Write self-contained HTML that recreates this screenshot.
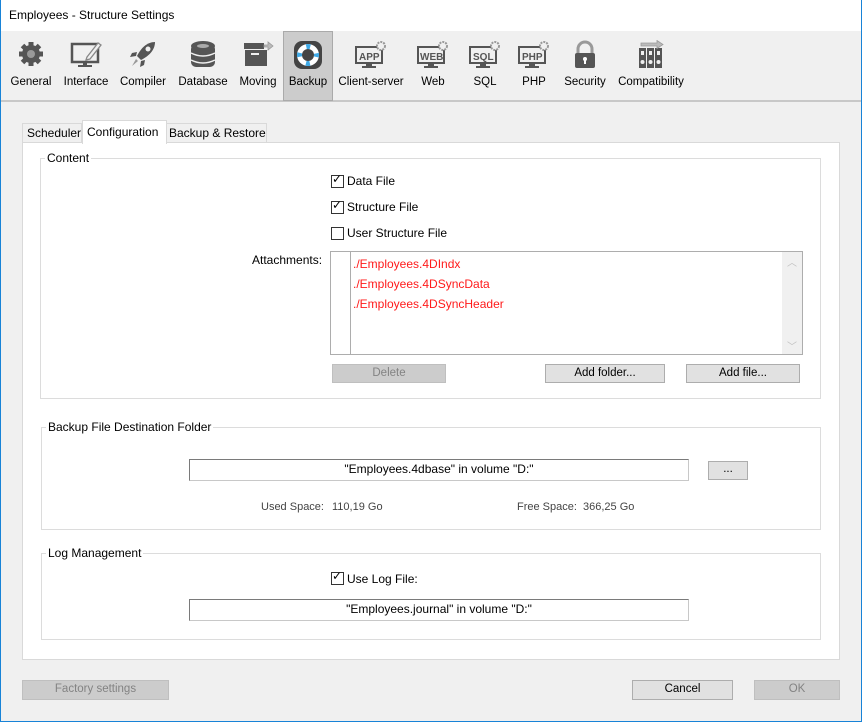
<!DOCTYPE html>
<html><head><meta charset="utf-8"><style>
*{box-sizing:border-box;margin:0;padding:0}
body{width:862px;height:722px;overflow:hidden;font-family:"Liberation Sans",sans-serif;font-size:12px;color:#000;background:#f0f0f0;position:relative}
.a{position:absolute;white-space:nowrap}
.win{position:absolute;left:0;top:0;width:862px;height:722px;border:1px solid #1883d7;border-top:none}
.title{position:absolute;left:0;top:0;width:862px;height:31px;background:#fff}
.tb{position:absolute;top:31px;height:70px;text-align:center;font-size:11.5px}
.tb svg{display:block;margin:9px auto 0}
.tb span{position:absolute;left:0;right:0;top:45px}
.grp{position:absolute;border:1px solid #dcdcdc}
.lbl{position:absolute;background:#fff;padding:0 2px;top:-8px;left:4px}
.cb{position:absolute;width:13px;height:13px;border:1px solid #333;background:#fff}
.btn{position:absolute;border:1px solid #adadad;background:#e1e1e1;text-align:center;line-height:17px;font-size:11.5px}
.dis{background:#cccccc;border-color:#bfbfbf;color:#838383}
.fld{position:absolute;background:#fff;border:1px solid #7a7a7a;border-right-color:#c8c8c8;border-bottom-color:#c8c8c8;text-align:center;line-height:19px}
</style></head><body>
<div class="title"></div>
<div class="a" style="left:9px;top:8px;font-size:12px">Employees - Structure Settings</div>
<div class="a" style="left:0;top:100px;width:862px;height:2px;background:#c8c8c8"></div>
<div class="a" style="left:283px;top:31px;width:50px;height:70px;background:#cccccc;border:1px solid #aaa"></div>

<div class="tb" style="left:6px;width:50px"><svg width="28" height="28" viewBox="0 0 28 28"><g fill="#555"><circle cx="14" cy="14" r="9"/><g stroke="#555" stroke-width="5"><line x1="14" y1="2" x2="14" y2="26"/><line x1="2" y1="14" x2="26" y2="14"/><line x1="5.5" y1="5.5" x2="22.5" y2="22.5"/><line x1="22.5" y1="5.5" x2="5.5" y2="22.5"/></g></g><circle cx="14" cy="14" r="4" fill="#999"/></svg><span>General</span></div>
<div class="tb" style="left:60px;width:52px"><svg width="32" height="28" viewBox="0 0 32 28"><rect x="2" y="4" width="26" height="18" fill="none" stroke="#555" stroke-width="2.5"/><rect x="13" y="22" width="4" height="3" fill="#555"/><rect x="8" y="25" width="14" height="2" fill="#555"/><path d="M17 17 L28 3 L31 5 L20 19 L16 20Z" fill="#f0f0f0" stroke="#888" stroke-width="1.3"/></svg><span>Interface</span></div>
<div class="tb" style="left:116px;width:54px"><svg width="28" height="28" viewBox="0 0 28 28"><path d="M26 2 C18 2 12 8 8 16 L12 20 C20 16 26 10 26 2Z" fill="#555"/><path d="M8 12 L3 13 L1 17 L7 16Z M16 20 L15 25 L11 27 L12 21Z" fill="#555"/><path d="M7 19 L3 26 L9 21Z" fill="#999"/><circle cx="19" cy="9" r="2.5" fill="#f0f0f0"/></svg><span>Compiler</span></div>
<div class="tb" style="left:176px;width:54px"><svg width="28" height="30" viewBox="0 0 28 30"><rect x="2" y="4" width="24" height="23" rx="5" fill="#555"/><ellipse cx="14" cy="6" rx="12" ry="5" fill="#555"/><ellipse cx="14" cy="6" rx="6" ry="2" fill="#aaa"/><path d="M2 13 Q14 19 26 13 M2 20 Q14 26 26 20" stroke="#f0f0f0" stroke-width="1.5" fill="none"/></svg><span>Database</span></div>
<div class="tb" style="left:234px;width:48px"><svg width="32" height="28" viewBox="0 0 32 28"><rect x="2" y="3" width="20" height="6" fill="#555"/><rect x="3" y="10" width="22" height="16" fill="#555"/><rect x="9" y="13" width="8" height="2" fill="#f0f0f0"/><path d="M22 5 H26 V2 L31 6 L26 10 V7 H22Z" fill="#bbb" stroke="#999" stroke-width="0.8"/></svg><span>Moving</span></div>
<div class="tb" style="left:283px;width:50px"><svg width="30" height="30" viewBox="0 0 30 30"><rect x="1" y="1" width="28" height="28" rx="8" fill="#444"/><circle cx="15" cy="15" r="11" fill="#fff"/><circle cx="15" cy="15" r="6" fill="#444"/><circle cx="15" cy="15" r="8.5" fill="none" stroke="#3fa9e6" stroke-width="5" stroke-dasharray="4 9.35" stroke-dashoffset="2"/></svg><span>Backup</span></div>
<div class="tb" style="left:336px;width:70px"><svg width="34" height="30" viewBox="0 0 34 30"><rect x="2" y="7" width="26" height="16" fill="none" stroke="#555" stroke-width="2"/><text x="5" y="20" font-family="Liberation Sans" font-weight="bold" font-size="10" fill="#555">APP</text><rect x="12" y="23" width="6" height="3" fill="#555"/><rect x="8" y="26" width="14" height="2" fill="#555"/><circle cx="27" cy="6" r="4" fill="#f0f0f0" stroke="#999" stroke-width="2" stroke-dasharray="2 1"/></svg><span>Client-server</span></div>
<div class="tb" style="left:410px;width:46px"><svg width="34" height="30" viewBox="0 0 34 30"><rect x="2" y="7" width="26" height="16" fill="none" stroke="#555" stroke-width="2"/><text x="4" y="20" font-family="Liberation Sans" font-weight="bold" font-size="10" fill="#555">WEB</text><rect x="12" y="23" width="6" height="3" fill="#555"/><rect x="8" y="26" width="14" height="2" fill="#555"/><circle cx="27" cy="6" r="4" fill="#f0f0f0" stroke="#999" stroke-width="2" stroke-dasharray="2 1"/></svg><span>Web</span></div>
<div class="tb" style="left:462px;width:46px"><svg width="34" height="30" viewBox="0 0 34 30"><rect x="2" y="7" width="26" height="16" fill="none" stroke="#555" stroke-width="2"/><text x="5" y="20" font-family="Liberation Sans" font-weight="bold" font-size="10" fill="#555">SQL</text><rect x="12" y="23" width="6" height="3" fill="#555"/><rect x="8" y="26" width="14" height="2" fill="#555"/><circle cx="27" cy="6" r="4" fill="#f0f0f0" stroke="#999" stroke-width="2" stroke-dasharray="2 1"/></svg><span>SQL</span></div>
<div class="tb" style="left:511px;width:46px"><svg width="34" height="30" viewBox="0 0 34 30"><rect x="2" y="7" width="26" height="16" fill="none" stroke="#555" stroke-width="2"/><text x="5" y="20" font-family="Liberation Sans" font-weight="bold" font-size="10" fill="#555">PHP</text><rect x="12" y="23" width="6" height="3" fill="#555"/><rect x="8" y="26" width="14" height="2" fill="#555"/><circle cx="27" cy="6" r="4" fill="#f0f0f0" stroke="#999" stroke-width="2" stroke-dasharray="2 1"/></svg><span>PHP</span></div>
<div class="tb" style="left:560px;width:50px"><svg width="28" height="30" viewBox="0 0 28 30"><path d="M7 14 V9 a7 7 0 0 1 14 0 V14" fill="none" stroke="#999" stroke-width="3"/><rect x="4" y="13" width="20" height="15" rx="2" fill="#555"/><circle cx="14" cy="19" r="2" fill="#fff"/><rect x="13" y="19" width="2" height="5" fill="#fff"/></svg><span>Security</span></div>
<div class="tb" style="left:614px;width:74px"><svg width="32" height="30" viewBox="0 0 32 30"><g fill="#555"><rect x="4" y="8" width="7" height="20"/><rect x="12" y="8" width="7" height="20"/><rect x="20" y="8" width="7" height="20"/></g><g fill="#f0f0f0"><circle cx="7.5" cy="22" r="2"/><circle cx="15.5" cy="22" r="2"/><circle cx="23.5" cy="22" r="2"/><rect x="6" y="11" width="3" height="4"/><rect x="14" y="11" width="3" height="4"/><rect x="22" y="11" width="3" height="4"/></g><path d="M6 3 H22 V0.5 L28 4.5 L22 8.5 V6 H6Z" fill="#bbb" stroke="#999" stroke-width="0.8"/></svg><span>Compatibility</span></div>

<!-- tabs -->
<div class="a" style="left:22px;top:123px;width:60px;height:20px;border:1px solid #d9d9d9;border-bottom:none;background:#f0f0f0"></div>
<div class="a" style="left:27px;top:126px">Scheduler</div>
<div class="a" style="left:166px;top:123px;width:101px;height:20px;border:1px solid #d9d9d9;border-bottom:none;background:#f0f0f0"></div>
<div class="a" style="left:169px;top:126px">Backup &amp; Restore</div>
<div class="a" style="left:22px;top:142px;width:818px;height:518px;background:#fff;border:1px solid #d9d9d9"></div>
<div class="a" style="left:82px;top:120px;width:85px;height:24px;background:#fff;border:1px solid #d9d9d9;border-bottom:none"></div>
<div class="a" style="left:87px;top:125px">Configuration</div>

<!-- content group -->
<div class="grp" style="left:40px;top:158px;width:781px;height:241px"><div class="lbl">Content</div></div>
<div class="cb" style="left:331px;top:175px"></div><div class="a" style="left:332px;top:172px;font-size:12px">✓</div><div class="a" style="left:347px;top:174px">Data File</div>
<div class="cb" style="left:331px;top:201px"></div><div class="a" style="left:332px;top:198px;font-size:12px">✓</div><div class="a" style="left:347px;top:200px">Structure File</div>
<div class="cb" style="left:331px;top:227px"></div><div class="a" style="left:347px;top:226px">User Structure File</div>
<div class="a" style="left:252px;top:253px">Attachments:</div>
<div class="a" style="left:330px;top:251px;width:473px;height:104px;border:1px solid #adadad;background:#fff"></div>
<div class="a" style="left:350px;top:252px;width:1px;height:102px;background:#adadad"></div>
<div class="a" style="left:782px;top:252px;width:20px;height:102px;background:#f0f0f0"></div>
<div class="a" style="left:787px;top:254px;color:#c0c0c0;font-size:10px">︿</div>
<div class="a" style="left:787px;top:338px;color:#c0c0c0;font-size:10px">﹀</div>
<div class="a" style="left:353px;top:257px;color:#ff1a1a">./Employees.4DIndx</div>
<div class="a" style="left:353px;top:277px;color:#ff1a1a">./Employees.4DSyncData</div>
<div class="a" style="left:353px;top:297px;color:#ff1a1a">./Employees.4DSyncHeader</div>
<div class="btn dis" style="left:332px;top:364px;width:114px;height:19px">Delete</div>
<div class="btn" style="left:545px;top:364px;width:120px;height:19px">Add folder...</div>
<div class="btn" style="left:686px;top:364px;width:114px;height:19px">Add file...</div>

<!-- backup dest -->
<div class="grp" style="left:41px;top:427px;width:780px;height:103px"><div class="lbl">Backup File Destination Folder</div></div>
<div class="fld" style="left:189px;top:459px;width:500px;height:22px">"Employees.4dbase" in volume "D:"</div>
<div class="btn" style="left:708px;top:461px;width:40px;height:19px;line-height:15px">...</div>
<div class="a" style="left:261px;top:501px;font-size:11px;color:#444">Used Space:</div>
<div class="a" style="left:332px;top:501px;font-size:11px;color:#444">110,19 Go</div>
<div class="a" style="left:517px;top:501px;font-size:11px;color:#444">Free Space:</div>
<div class="a" style="left:583px;top:501px;font-size:11px;color:#444">366,25 Go</div>

<!-- log -->
<div class="grp" style="left:41px;top:553px;width:780px;height:87px"><div class="lbl">Log Management</div></div>
<div class="cb" style="left:331px;top:572px"></div><div class="a" style="left:332px;top:569px;font-size:12px">✓</div><div class="a" style="left:347px;top:572px">Use Log File:</div>
<div class="fld" style="left:189px;top:599px;width:500px;height:22px">"Employees.journal" in volume "D:"</div>

<!-- bottom -->
<div class="btn dis" style="left:22px;top:680px;width:147px;height:20px">Factory settings</div>
<div class="btn" style="left:632px;top:680px;width:101px;height:20px">Cancel</div>
<div class="btn dis" style="left:754px;top:680px;width:86px;height:20px">OK</div>
<div class="win"></div>
</body></html>
